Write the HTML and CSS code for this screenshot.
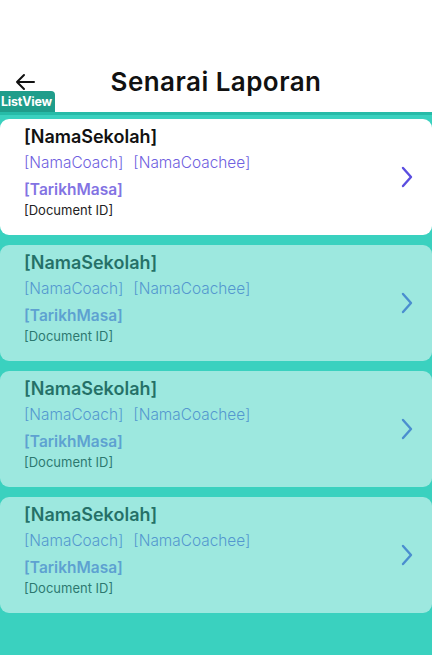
FILE: index.html
```html
<!DOCTYPE html>
<html>
<head>
<meta charset="utf-8">
<link rel="stylesheet" href="styles.css">
</head>
<body>
<div class="page">
  <header class="header">
    <button class="back" aria-label="Back">
      <svg width="22" height="18" viewBox="0 0 22 18"><path d="M20 9H3M10 2L3 9l7 7" fill="none" stroke="#111" stroke-width="2" stroke-linecap="round" stroke-linejoin="round"/></svg>
    </button>
    <h1 class="title">Senarai Laporan</h1>
    <span class="tag">ListView</span>
  </header>
  <main class="list">
    <div class="card">
      <div class="info">
        <div class="school">[NamaSekolah]</div>
        <div class="names"><span>[NamaCoach]</span><span>[NamaCoachee]</span></div>
        <div class="date">[TarikhMasa]</div>
        <div class="docid">[Document ID]</div>
      </div>
      <svg class="chev" width="14" height="22" viewBox="0 0 14 22"><path d="M3 2l8 9-8 9" fill="none" stroke="#5b4ee0" stroke-width="2.4" stroke-linecap="round" stroke-linejoin="round"/></svg>
    </div>
    <div class="card dim">
      <div class="info">
        <div class="school">[NamaSekolah]</div>
        <div class="names"><span>[NamaCoach]</span><span>[NamaCoachee]</span></div>
        <div class="date">[TarikhMasa]</div>
        <div class="docid">[Document ID]</div>
      </div>
      <svg class="chev" width="14" height="22" viewBox="0 0 14 22"><path d="M3 2l8 9-8 9" fill="none" stroke="#5b4ee0" stroke-width="2.4" stroke-linecap="round" stroke-linejoin="round"/></svg>
    </div>
    <div class="card dim">
      <div class="info">
        <div class="school">[NamaSekolah]</div>
        <div class="names"><span>[NamaCoach]</span><span>[NamaCoachee]</span></div>
        <div class="date">[TarikhMasa]</div>
        <div class="docid">[Document ID]</div>
      </div>
      <svg class="chev" width="14" height="22" viewBox="0 0 14 22"><path d="M3 2l8 9-8 9" fill="none" stroke="#5b4ee0" stroke-width="2.4" stroke-linecap="round" stroke-linejoin="round"/></svg>
    </div>
    <div class="card dim">
      <div class="info">
        <div class="school">[NamaSekolah]</div>
        <div class="names"><span>[NamaCoach]</span><span>[NamaCoachee]</span></div>
        <div class="date">[TarikhMasa]</div>
        <div class="docid">[Document ID]</div>
      </div>
      <svg class="chev" width="14" height="22" viewBox="0 0 14 22"><path d="M3 2l8 9-8 9" fill="none" stroke="#5b4ee0" stroke-width="2.4" stroke-linecap="round" stroke-linejoin="round"/></svg>
    </div>
  </main>
</div>
</body>
</html>
```
FILE: styles.css
```css
* { box-sizing: border-box; }
html, body { margin: 0; padding: 0; }
body {
  width: 432px;
  height: 655px;
  overflow: hidden;
  background: #3ad1bf;
  font-family: Inter, "Noto Sans", sans-serif;
}
.page { display: flex; flex-direction: column; height: 655px; }
.header {
  position: relative;
  height: 112px;
  background: #fff;
  display: flex;
  align-items: flex-end;
  justify-content: center;
  padding-bottom: 14px;
}
.back {
  position: absolute;
  left: 14px;
  top: 73px;
  border: 0;
  background: none;
  padding: 0;
  width: 22px;
  height: 18px;
}
.title {
  margin: 0;
  font-size: 26px;
  font-weight: 600;
  color: #111;
  line-height: 32px;
  letter-spacing: 0.45px;
}
.tag {
  position: absolute;
  left: 0;
  bottom: 0;
  height: 21px;
  padding: 0 3px 0 1px;
  background: #1f9d8b;
  color: #fff;
  font-size: 12.5px;
  font-weight: 700;
  line-height: 21px;
  border-radius: 0 4px 0 0;
  letter-spacing: -0.2px;
}
.list {
  flex: 1;
  border-top: 3px solid #26bba8;
  padding-top: 4px;
  display: flex;
  flex-direction: column;
  gap: 10px;
}
.card {
  height: 116px;
  background: #fff;
  border-radius: 9px;
  display: flex;
  align-items: center;
  justify-content: space-between;
  padding: 0 18px 0 24px;
}
.card.dim { opacity: 0.5; }
.info {
  align-self: flex-start;
  display: flex;
  flex-direction: column;
  padding-top: 6px;
}
.school {
  font-size: 18px;
  font-weight: 600;
  color: #111;
  line-height: 24px;
}
.names {
  display: flex;
  gap: 10px;
  font-size: 15.4px;
  font-weight: 300;
  color: #6f5fe0;
  line-height: 27px;
}
.date {
  margin-top: 3px;
  font-size: 15.5px;
  font-weight: 600;
  color: #8373e3;
  line-height: 22px;
}
.docid {
  font-size: 13px;
  font-weight: 400;
  color: #222;
  line-height: 18px;
}
.chev { flex: none; }
```
